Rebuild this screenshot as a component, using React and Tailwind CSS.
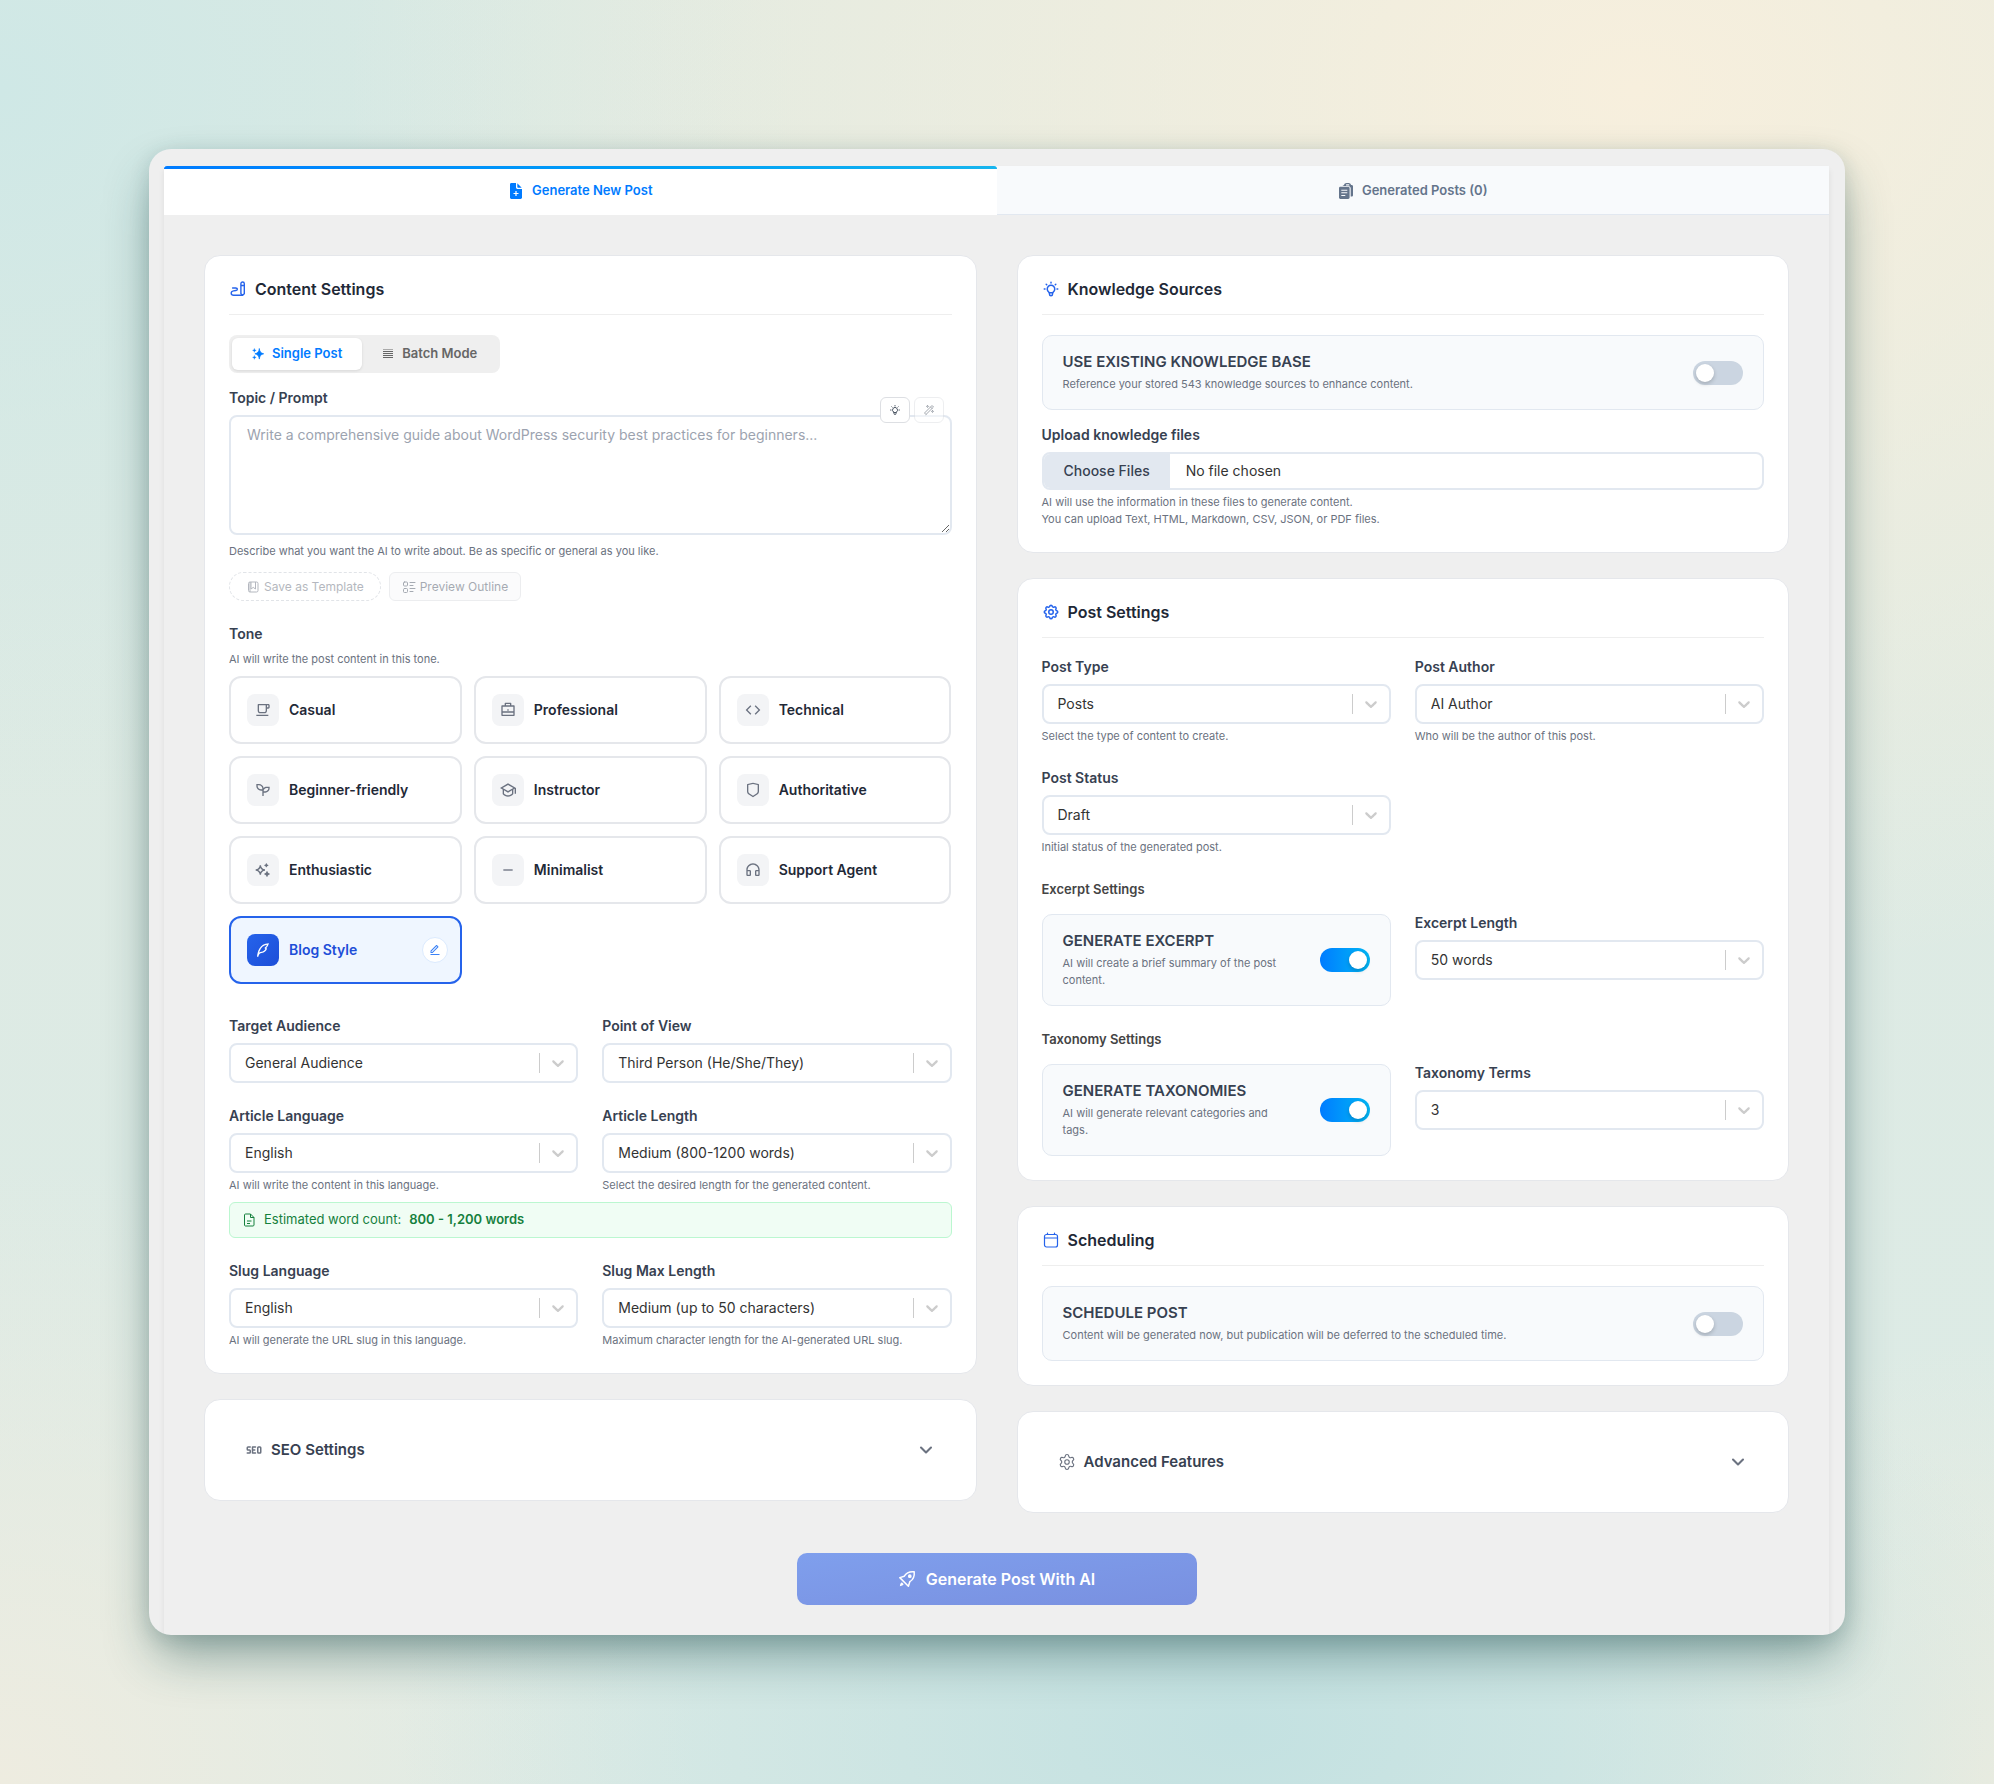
import React from "react";
import {
  RiCupLine,
  RiBriefcaseLine,
  RiCodeLine,
  RiSeedlingLine,
  RiGraduationCapLine,
  RiShieldLine,
  RiSparklingLine,
  RiSubtractLine,
  RiHeadphoneLine,
  RiQuillPenLine,
  RiEditLine,
} from "react-icons/ri";
import { TbBulb, TbSettings, TbSeo, TbWand } from "react-icons/tb";
import { ChevronDown, Settings } from "lucide-react";

const TONES = [
  { name: "Casual", icon: RiCupLine },
  { name: "Professional", icon: RiBriefcaseLine },
  { name: "Technical", icon: RiCodeLine },
  { name: "Beginner-friendly", icon: RiSeedlingLine },
  { name: "Instructor", icon: RiGraduationCapLine },
  { name: "Authoritative", icon: RiShieldLine },
  { name: "Enthusiastic", icon: RiSparklingLine },
  { name: "Minimalist", icon: RiSubtractLine },
  { name: "Support Agent", icon: RiHeadphoneLine },
];

function FilePlusIcon() {
  return (
    <svg viewBox="0 0 16 16" className="size-4" fill="currentColor" aria-hidden="true">
      <path
        fillRule="evenodd"
        d="M3.4 0H8v4.2C8 5.2 8.8 6 9.8 6H14v8.6c0 .8-.6 1.4-1.4 1.4H3.4C2.600 16 2 15.400 2 14.600V1.400C2 .6 2.600 0 3.400 0ZM7.400 8v1.900H5.500v1.200h1.900V13h1.200v-1.900h1.900V9.900H8.600V8H7.400Z"
      />
      <path d="M9.300.3 13.700 4.700H10c-.4 0-.7-.3-.7-.7V.3Z" />
    </svg>
  );
}

function ClipboardsIcon() {
  return (
    <svg viewBox="0 0 16 16" className="size-4" fill="currentColor" aria-hidden="true">
      <path d="M6 2.200C6.200.9 7.300 0 8.600 0h2c1.200 0 2.200.8 2.500 1.900h.5c.8 0 1.400.6 1.400 1.400v8.900c0 .8-.6 1.400-1.400 1.400h-.9V5.200c0-1.300-1-2.300-2.300-2.300H4.600c.2-.4.600-.7 1.100-.7H6Zm2-.4v.6h3.300v-.6c0-.3-.2-.5-.5-.5H8.500c-.3 0-.5.200-.5.500Z" />
      <path
        fillRule="evenodd"
        d="M2.400 3.700h7.800c.8 0 1.400.6 1.400 1.400v9.500c0 .8-.6 1.400-1.400 1.400H2.400C1.600 16 1 15.400 1 14.600V5.100c0-.8.600-1.400 1.400-1.400ZM3.300 6.700v1h6v-1h-6Zm0 2.600v1h6v-1h-6Zm0 2.600v1h4v-1h-4Z"
      />
    </svg>
  );
}

function PenScribbleIcon({ className }) {
  return (
    <svg viewBox="0 0 18 18" className={className} fill="none" stroke="currentColor" strokeWidth="1.400" strokeLinecap="round" strokeLinejoin="round" aria-hidden="true">
      <path d="M11.900 3.700c0-1 .8-1.700 1.700-1.700s1.700.8 1.700 1.700v10l-1.700 1.500-1.700-1.500V3.700ZM11.900 5.500h3.400" />
      <path d="M3.600 8h3.100c2.200 0 2.200 2.200.2 2.500l-2.400.4c-3.100.6-3.100 4.300.2 4.300h8.800" />
    </svg>
  );
}

function CalendarIcon({ className }) {
  return (
    <svg viewBox="0 0 18 18" className={className} fill="none" stroke="currentColor" strokeWidth="1.200" strokeLinecap="round" aria-hidden="true">
      <rect x="2.500" y="3.500" width="13" height="12.500" rx="2" />
      <path d="M2.500 7h13M5.500 2v1.500M12.500 2v1.500" />
    </svg>
  );
}

function RocketIcon() {
  return (
    <svg viewBox="0 0 18 18" className="size-[18px]" fill="none" stroke="currentColor" strokeWidth="1.500" strokeLinejoin="round" aria-hidden="true">
      <path d="M16.200 1.800C11.500 1.300 8.300 2.800 6.300 6.200L1.800 7.600l8.600 8.600 1.400-4.500c3.400-2 4.900-5.200 4.400-9.900Z" />
      <circle cx="11.800" cy="6.200" r="1.100" fill="currentColor" />
      <path d="M3.800 12.300 5.700 14.200 4.300 15.600 1.800 16.200 2.400 13.700Z" fill="currentColor" stroke="none" />
    </svg>
  );
}

function SparklesIcon() {
  return (
    <svg viewBox="0 0 12 12" className="size-3" fill="currentColor" aria-hidden="true">
      <path d="M7.300.5c.4 3.200 1.400 4.600 4.400 5.300-3 .7-4 2.100-4.400 5.300C6.900 7.900 5.900 6.500 2.900 5.800c3-.7 4-2.100 4.400-5.300Z" stroke="currentColor" strokeWidth=".7" strokeLinejoin="round" />
      <path d="M2.400.5c.2 1.200.6 1.700 1.800 1.900-1.200.2-1.600.7-1.800 1.900C2.200 3.100 1.800 2.600.6 2.400 1.800 2.200 2.200 1.700 2.400.5ZM2.400 7.500c.2 1.200.6 1.700 1.800 1.900-1.200.2-1.600.7-1.800 1.900-.2-1.200-.6-1.700-1.800-1.900 1.200-.2 1.600-.7 1.800-1.900Z" stroke="currentColor" strokeWidth=".4" />
    </svg>
  );
}

function RowsIcon() {
  return (
    <svg viewBox="0 0 12 12" className="size-3" fill="none" stroke="currentColor" aria-hidden="true">
      <path d="M1 1.500h10" opacity="0.5" />
      <path d="M1 3.500h10M1 5.500h10M1 7.500h10M1 9.500h10" />
    </svg>
  );
}

function TemplateIcon() {
  return (
    <svg viewBox="0 0 14 14" className="size-3.5" fill="none" stroke="currentColor" strokeLinejoin="round" aria-hidden="true">
      <rect x="2.500" y="2" width="9.500" height="10" rx="1.500" />
      <path d="M5 2v7l2.200-1.600L9.500 9V2M4 12V2" />
    </svg>
  );
}

function OutlineIcon() {
  return (
    <svg viewBox="0 0 14 14" className="size-3.5" fill="none" stroke="currentColor" strokeLinecap="round" aria-hidden="true">
      <rect x="1.500" y="2" width="4" height="4" rx="1" />
      <rect x="1.500" y="8.500" width="4" height="4" rx="1" />
      <path d="M8 2.500h5M8 5.500h3M8 8.500h5M8 11.500h3" />
    </svg>
  );
}

function DocIcon() {
  return (
    <svg viewBox="0 0 14 14" className="size-3.5" fill="none" stroke="currentColor" strokeLinejoin="round" aria-hidden="true">
      <path d="M3.500 1h5L12 4.500V12c0 .6-.4 1-1 1H3.500c-.6 0-1-.4-1-1V2c0-.6.4-1 1-1ZM8.500 1v3.500H12M5 8h4.500M5 10.500h3" />
    </svg>
  );
}

function Card({ icon: Icon, title, children }) {
  return (
    <section className="bg-white border border-[#e5e7eb] rounded-2xl p-6">
      <h2 className="flex items-center gap-2 text-base leading-[18px] font-semibold text-[#1f2937] pb-4 mb-5 border-b border-[#eeeeee]">
        <Icon className="size-[18px] text-[#2563eb]" />
        {title}
      </h2>
      {children}
    </section>
  );
}

function Label({ htmlFor, children }) {
  return (
    <label htmlFor={htmlFor} className="block text-sm leading-[18px] font-semibold text-[#374151] mb-2">
      {children}
    </label>
  );
}

function Help({ children }) {
  return <p className="text-[11px] leading-[17px] text-[#6b7280]">{children}</p>;
}

function SelectField({ id, label, value, help }) {
  return (
    <div>
      <Label htmlFor={id}>{label}</Label>
      <div className="relative">
        <select
          id={id}
          defaultValue={value}
          className="appearance-none block w-full h-10 pl-3.5 pr-14 bg-white border-2 border-[#e2e8f0] rounded-lg text-sm text-[#333333]"
        >
          <option>{value}</option>
        </select>
        <div className="pointer-events-none absolute inset-y-2.5 right-0.5 flex items-center border-l border-[#cccccc] px-2">
          <svg viewBox="0 0 20 20" className="size-5 text-[#cccccc]" fill="currentColor" aria-hidden="true">
            <path d="M4.516 7.548c0.436-0.446 1.043-0.481 1.576 0l3.908 3.747 3.908-3.747c0.533-0.481 1.141-0.446 1.574 0 0.436 0.445 0.408 1.197 0 1.615-0.406 0.418-4.695 4.502-4.695 4.502-0.217 0.223-0.502 0.335-0.787 0.335s-0.570-0.112-0.789-0.335c0 0-4.287-4.084-4.695-4.502s-0.436-1.170 0-1.615z" />
          </svg>
        </div>
      </div>
      {help && (
        <div className="mt-1">
          <Help>{help}</Help>
        </div>
      )}
    </div>
  );
}

function ToggleBox({ id, title, help, checked }) {
  return (
    <div className="flex items-center justify-between gap-8 bg-[#f8fafc] border border-[#e2e8f0] rounded-[10px] px-5 py-4">
      <div>
        <label htmlFor={id} className="block text-[15px] leading-5 font-semibold text-[#374151] mb-1">
          {title}
        </label>
        <Help>{help}</Help>
      </div>
      <input
        id={id}
        type="checkbox"
        defaultChecked={checked}
        className="appearance-none flex items-center shrink-0 w-[50px] h-6 px-[3px] rounded-full bg-[#cbd5e1] checked:justify-end checked:bg-linear-to-r checked:from-[#007bff] checked:to-[#06b6f4] before:size-[18px] before:rounded-full before:bg-white before:shadow-[0_2px_4px_rgba(0,0,0,0.2)]"
      />
    </div>
  );
}

function Collapsed({ icon: Icon, strokeWidth, title }) {
  return (
    <section className="bg-white border border-[#e5e7eb] rounded-2xl p-6">
      <button type="button" className="flex items-center gap-2 w-full p-4 text-[15px] leading-5 font-semibold text-[#374151]">
        <Icon className="size-[18px] text-[#6b7280]" strokeWidth={strokeWidth} />
        {title}
        <ChevronDown className="ml-auto size-5 text-[#6b7280]" strokeWidth={2.5} />
      </button>
    </section>
  );
}

export default function App() {
  return (
    <div className="min-h-screen p-[149px] font-[Inter,sans-serif] bg-[radial-gradient(ellipse_65%_50%_at_82%_5%,#f7efdd_0%,transparent_100%),radial-gradient(ellipse_40%_40%_at_0%_5%,#cfe8e6_0%,transparent_100%),radial-gradient(ellipse_42%_28%_at_62%_97%,#c3e1e1_0%,transparent_100%),radial-gradient(ellipse_35%_35%_at_0%_100%,#eeece0_0%,transparent_100%),radial-gradient(ellipse_22%_25%_at_100%_100%,#ebece0_0%,transparent_100%),linear-gradient(#dfeae2,#dcebe6)]">
      <main className="bg-[#efefef] rounded-[22px] pt-[17px] pl-[15px] pr-4 shadow-[0_25px_50px_-6px_rgba(20,70,70,0.45),0_4px_20px_rgba(20,60,60,0.15)] overflow-hidden">
        <div className="shadow-[0_4px_6px_rgba(0,0,0,0.08)]">
          <div role="tablist" className="grid grid-cols-2 text-[13px] font-semibold">
            <button
              type="button"
              role="tab"
              aria-selected="true"
              className="flex flex-col h-[49px] bg-white text-[#007bff]"
            >
              <span className="h-[3px] w-full rounded-t-[3px] bg-linear-to-r from-[#007bff] to-[#17b5ee]" />
              <span className="flex flex-1 w-full items-center justify-center gap-2 pb-0.5">
                <FilePlusIcon />
                Generate New Post
              </span>
            </button>
            <button
              type="button"
              role="tab"
              aria-selected="false"
              className="flex items-center justify-center gap-2 h-[49px] pt-0.5 bg-[#f8fafc] border-b border-[#e2e8f0] text-[#64748b]"
            >
              <ClipboardsIcon />
              Generated Posts (0)
            </button>
          </div>

          <div className="px-10 pt-10 pb-[30px]">
            <div className="grid grid-cols-2 items-start gap-10">
              <div className="flex flex-col gap-[25px]">
                <Card icon={PenScribbleIcon} title="Content Settings">
                  <div className="inline-flex p-[3px] bg-[#efefef] rounded-lg text-[13px] font-semibold">
                    <button type="button" className="flex items-center gap-2 h-8 px-5 rounded-md bg-white text-[#007bff] shadow-[0_1px_3px_rgba(0,0,0,0.1)]">
                      <SparklesIcon />
                      Single Post
                    </button>
                    <button type="button" className="flex items-center gap-2 h-8 px-5 rounded-md text-[#666666]">
                      <RowsIcon />
                      Batch Mode
                    </button>
                  </div>

                  <div className="relative mt-4">
                    <Label htmlFor="topic">Topic / Prompt</Label>
                    <textarea
                      id="topic"
                      placeholder="Write a comprehensive guide about WordPress security best practices for beginners..."
                      className="block w-full h-[120px] px-4 py-2 border-2 border-[#e2e8f0] rounded-lg text-sm text-[#374151] placeholder:text-[#9ca3af] resize-y"
                    />
                    <div className="absolute top-2 right-2 flex gap-1">
                      <button type="button" aria-label="Suggest a topic" className="flex items-center justify-center w-[30px] h-[26px] bg-white border border-[#dddfe3] rounded-md text-[#4b5563]">
                        <TbBulb className="size-3" />
                      </button>
                      <button type="button" aria-label="Improve the prompt" disabled className="flex items-center justify-center w-[30px] h-[26px] bg-white border border-[#dddfe3] rounded-md text-[#4b5563] opacity-50">
                        <TbWand className="size-3" />
                      </button>
                    </div>
                  </div>
                  <div className="mt-2">
                    <Help>Describe what you want the AI to write about. Be as specific or general as you like.</Help>
                  </div>

                  <div className="flex gap-2 mt-3 text-xs text-[#6b7280]">
                    <button type="button" disabled className="flex items-center gap-1 h-[29px] px-4 border border-dashed border-[#c5cad2] rounded-full opacity-50">
                      <TemplateIcon />
                      Save as Template
                    </button>
                    <button type="button" disabled className="flex items-center gap-1 h-[29px] px-3 bg-[#f9fafb] border border-[#e0e2e6] rounded-md opacity-60">
                      <OutlineIcon />
                      Preview Outline
                    </button>
                  </div>

                  <h3 className="mt-6 mb-2 text-sm leading-[18px] font-semibold text-[#374151]">Tone</h3>
                  <Help>AI will write the post content in this tone.</Help>
                  <div className="grid grid-cols-3 gap-3 mt-2 text-sm font-semibold text-[#1f2937]">
                    {TONES.map((tone) => (
                      <button
                        key={tone.name}
                        type="button"
                        className="flex items-center gap-2.5 h-[68px] px-4 bg-white border-2 border-[#e5e7eb] rounded-xl"
                      >
                        <span className="flex items-center justify-center size-8 rounded-lg bg-[#f3f4f6] text-[#6b7280]">
                          <tone.icon className="size-4" />
                        </span>
                        {tone.name}
                      </button>
                    ))}
                    <div className="flex items-center h-[68px] pl-4 pr-3 bg-[#eff6ff] border-2 border-[#2563eb] rounded-xl text-[#1d4ed8]">
                      <button type="button" className="flex flex-1 items-center gap-2.5">
                        <span className="flex items-center justify-center size-8 rounded-lg bg-linear-to-br from-[#2563eb] to-[#1d4ed8] text-white">
                          <RiQuillPenLine className="size-4" />
                        </span>
                        Blog Style
                      </button>
                      <button type="button" aria-label="Edit Blog Style" className="flex items-center justify-center size-[26px] rounded-full bg-white border border-[#dbeafe] text-[#3b82f6]">
                        <RiEditLine className="size-3" />
                      </button>
                    </div>
                  </div>

                  <div className="grid grid-cols-2 gap-6 mt-[33px]">
                    <SelectField id="audience" label="Target Audience" value="General Audience" />
                    <SelectField id="pov" label="Point of View" value="Third Person (He/She/They)" />
                    <SelectField id="language" label="Article Language" value="English" help="AI will write the content in this language." />
                    <SelectField id="length" label="Article Length" value="Medium (800-1200 words)" help="Select the desired length for the generated content." />
                  </div>
                  <div className="flex items-center gap-2 h-9 mt-2 mb-6 px-3 bg-[#f0fdf4] border border-[#bbf7d0] rounded-md text-[13px] text-[#15803d]">
                    <DocIcon />
                    Estimated word count: <strong className="font-semibold">800 - 1,200 words</strong>
                  </div>
                  <div className="grid grid-cols-2 gap-6">
                    <SelectField id="slug-language" label="Slug Language" value="English" help="AI will generate the URL slug in this language." />
                    <SelectField id="slug-length" label="Slug Max Length" value="Medium (up to 50 characters)" help="Maximum character length for the AI-generated URL slug." />
                  </div>
                </Card>

                <Collapsed icon={TbSeo} strokeWidth={2} title="SEO Settings" />
              </div>

              <div className="flex flex-col gap-[25px]">
                <Card icon={TbBulb} title="Knowledge Sources">
                  <ToggleBox id="use-kb" title="USE EXISTING KNOWLEDGE BASE" help="Reference your stored 543 knowledge sources to enhance content." />
                  <div className="mt-4">
                    <Label htmlFor="files">Upload knowledge files</Label>
                    <input
                      id="files"
                      type="file"
                      multiple
                      className="block w-full h-[38px] border-2 border-[#e2e8f0] rounded-lg text-sm leading-[34px] text-[#333333] overflow-hidden file:h-[34px] file:px-5 file:mr-4 file:bg-[#e2e8f0] file:text-sm file:font-medium file:text-[#374151]"
                    />
                  </div>
                  <div className="mt-1">
                    <Help>AI will use the information in these files to generate content.</Help>
                    <Help>You can upload Text, HTML, Markdown, CSV, JSON, or PDF files.</Help>
                  </div>
                </Card>

                <Card icon={TbSettings} title="Post Settings">
                  <div className="grid grid-cols-2 gap-6">
                    <SelectField id="post-type" label="Post Type" value="Posts" help="Select the type of content to create." />
                    <SelectField id="post-author" label="Post Author" value="AI Author" help="Who will be the author of this post." />
                    <SelectField id="post-status" label="Post Status" value="Draft" help="Initial status of the generated post." />
                  </div>
                  <h3 className="mt-6 mb-4 text-[13px] leading-[18px] font-semibold text-[#444444]">Excerpt Settings</h3>
                  <div className="grid grid-cols-2 gap-6">
                    <ToggleBox id="excerpt" title="GENERATE EXCERPT" help="AI will create a brief summary of the post content." checked />
                    <SelectField id="excerpt-length" label="Excerpt Length" value="50 words" />
                  </div>
                  <h3 className="mt-6 mb-4 text-[13px] leading-[18px] font-semibold text-[#444444]">Taxonomy Settings</h3>
                  <div className="grid grid-cols-2 gap-6">
                    <ToggleBox id="taxonomies" title="GENERATE TAXONOMIES" help="AI will generate relevant categories and tags." checked />
                    <SelectField id="terms" label="Taxonomy Terms" value="3" />
                  </div>
                </Card>

                <Card icon={CalendarIcon} title="Scheduling">
                  <ToggleBox id="schedule" title="SCHEDULE POST" help="Content will be generated now, but publication will be deferred to the scheduled time." />
                </Card>

                <Collapsed icon={Settings} strokeWidth={1.5} title="Advanced Features" />
              </div>
            </div>

            <button
              type="button"
              className="flex items-center justify-center gap-2.5 w-[400px] h-[52px] mt-10 mx-auto rounded-[10px] bg-linear-to-br from-[#7f9fed] to-[#7990e0] text-base font-semibold text-white"
            >
              <RocketIcon />
              Generate Post With AI
            </button>
          </div>
        </div>
      </main>
    </div>
  );
}
